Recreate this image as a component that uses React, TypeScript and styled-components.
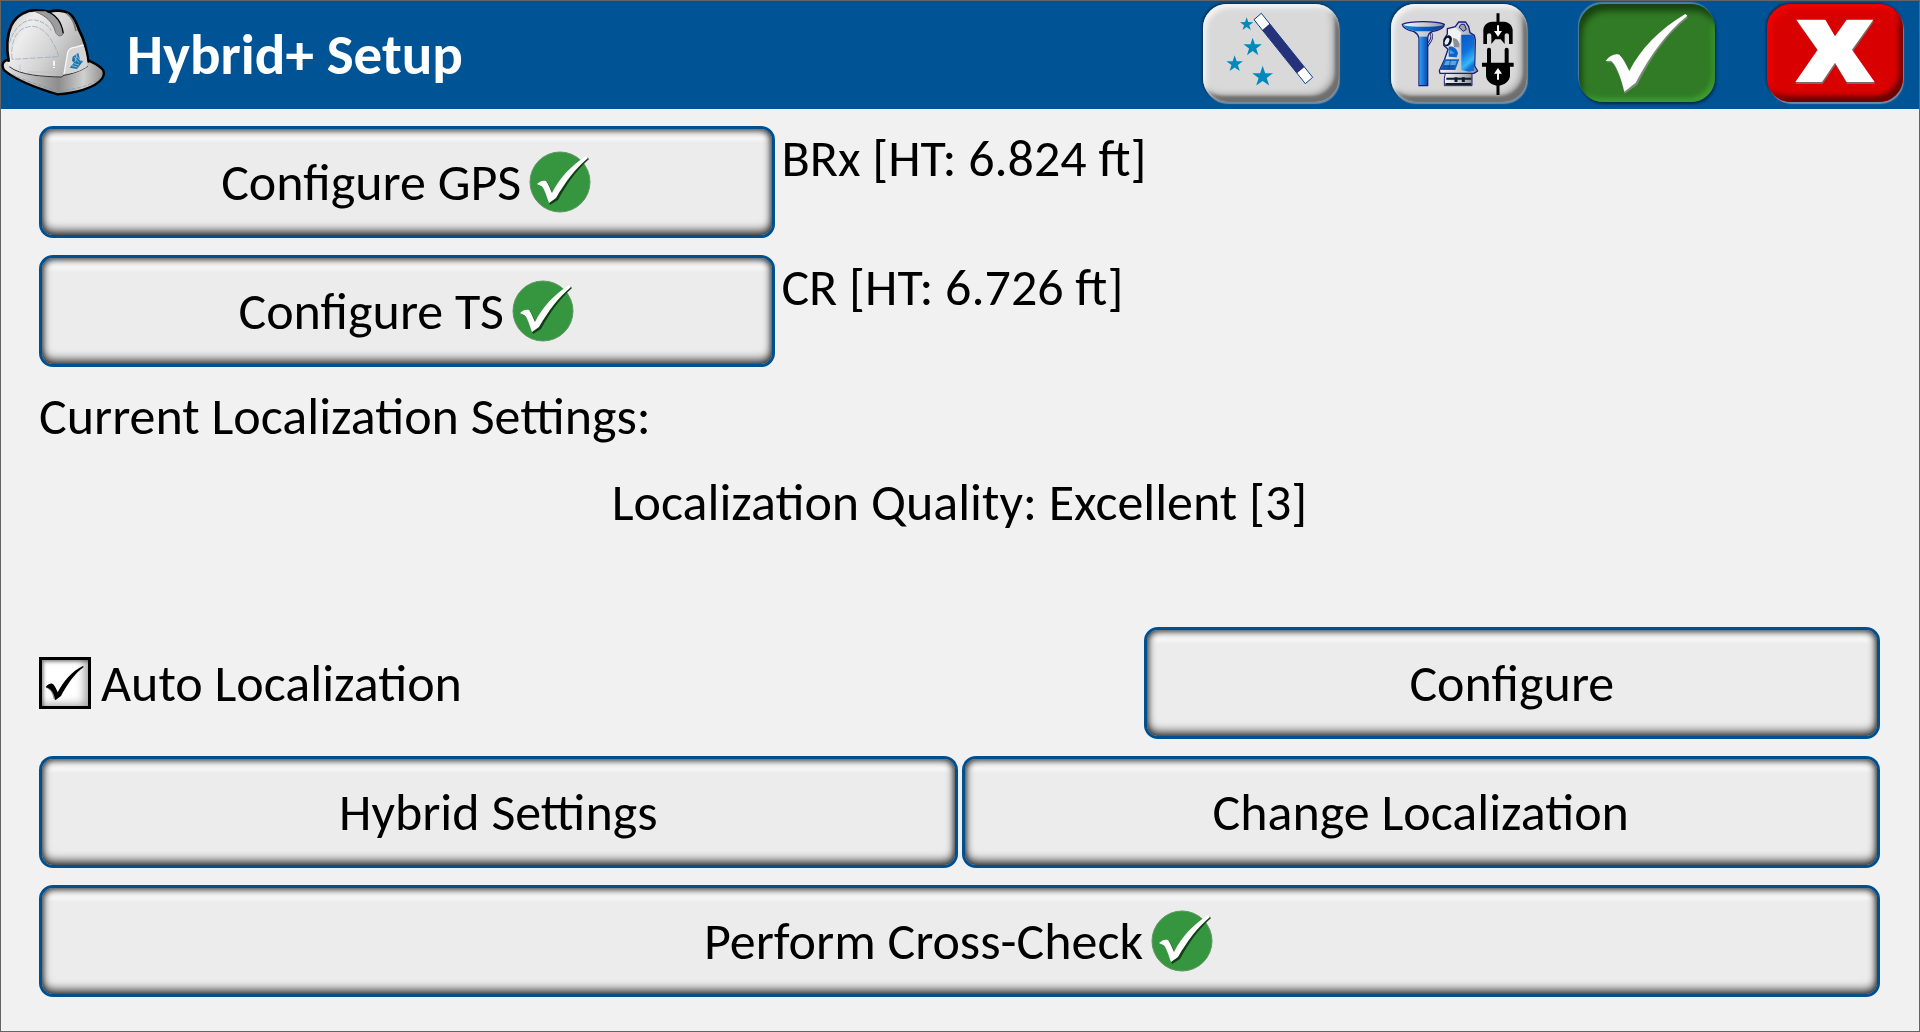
import React, { useState } from "react";
import styled, { createGlobalStyle, css } from "styled-components";

const GlobalStyle = createGlobalStyle`
  * { box-sizing: border-box; }
  body { margin: 0; background: #f1f1f1; }
  button, input { font: inherit; color: inherit; margin: 0; }
`;

const Window = styled.div`
  min-height: 100vh;
  border: 1px solid #646464;
  background: #f1f1f1;
  color: #000;
  font-family: Calibri, Carlito, Lato, sans-serif;
  font-size: 52px;
  line-height: 64px;
`;

const Header = styled.header`
  display: flex;
  align-items: center;
  height: 108px;
  padding-right: 16px;
  background: #005496;
  color: #fff;
`;

const Title = styled.h1`
  flex: 1;
  margin: 0;
  padding-left: 21px;
  font-size: 57px;
  font-weight: 700;
  line-height: 64px;
`;

const Toolbar = styled.div`
  display: flex;
  align-self: flex-start;
  gap: 52px;
  padding-top: 3px;
`;

type Tone = "silver" | "green" | "red";

const tones = {
  silver: css`
    background: #d9d9d9;
    box-shadow:
      inset 3px 4px 5px #f4f4f4,
      inset -4px -6px 3px #6f6f6f,
      inset -7px -8px 6px #a8a8a8,
      1px 2px 1px #6d8ba6,
      -1px -1px 3px #00294a;
  `,
  green: css`
    background: #317b26;
    box-shadow:
      inset 3px 7px 6px #17430f,
      inset -3px -4px 4px #3d9c2e,
      -1px -2px 1px #4d7ea6,
      1px 2px 3px #00294a;
  `,
  red: css`
    background: #d80000;
    box-shadow:
      inset 3px 4px 6px #f40000,
      inset -4px -6px 4px #6a0000,
      1px 2px 1px #6d8ba6,
      -1px -1px 3px #00294a;
  `,
};

const ToolButton = styled.button<{ $tone: Tone }>`
  display: block;
  width: 136px;
  height: 98px;
  padding: 0;
  border: 0;
  border-radius: 24px;
  cursor: pointer;
  ${(p) => tones[p.$tone]}
  svg { display: block; width: 100%; height: 100%; }
`;

const Content = styled.main`
  display: flex;
  flex-direction: column;
  gap: 17px;
  padding: 17px 39px 34px 38px;
`;

const Row = styled.div`
  display: flex;
  align-items: center;
  justify-content: space-between;
  gap: 4px;
`;

const DeviceRow = styled.div`
  display: flex;
  gap: 6px;
`;

const PushButton = styled.button<{ $size?: "narrow" | "full" }>`
  display: flex;
  align-items: center;
  justify-content: center;
  gap: 8px;
  flex: ${(p) => (p.$size === "narrow" ? "0 0 40%" : "1 1 0")};
  height: 112px;
  padding: 0 12px;
  border: 3px solid #00508f;
  border-radius: 14px;
  background: linear-gradient(#f6f6f6 10px, #ececec 14px);
  box-shadow:
    inset 0 2px 6px rgba(0, 0, 0, 0.65),
    inset 0 -4px 10px rgba(0, 0, 0, 0.75);
  cursor: pointer;
`;

const Settings = styled.section`
  display: flex;
  flex-direction: column;
  gap: 22px;
  min-height: 226px;
`;

const Heading = styled.h2`
  margin: 0;
  font-size: inherit;
  font-weight: 400;
`;

const Quality = styled.p`
  margin: 0;
  text-align: center;
`;

const CheckLabel = styled.label`
  display: flex;
  align-items: center;
  gap: 10px;
  cursor: pointer;
`;

const CheckBox = styled.span`
  display: grid;
  width: 52px;
  height: 52px;
  > * { grid-area: 1 / 1; }
  svg { pointer-events: none; width: 52px; height: 52px; }
`;

const CheckInput = styled.input`
  appearance: none;
  width: 52px;
  height: 52px;
  border: 3px solid #000;
  background: #fff;
  box-shadow:
    inset 2px 2px 3px rgba(0, 0, 0, 0.35),
    inset -4px -2px 8px rgba(0, 0, 0, 0.35);
  cursor: pointer;
`;

const HatArt = styled.svg`
  display: block;
  width: 105px;
  height: 108px;
`;

const BadgeArt = styled.svg`
  flex: none;
  width: 64px;
  height: 62px;
`;

const Hat = () => (
  <HatArt viewBox="3 3 315 324" aria-hidden="true">
    <defs>
      <linearGradient id="shell" x1="0" y1="0" x2="1" y2="0.5">
        <stop offset="0" stopColor="#c4c4c4" />
        <stop offset="0.3" stopColor="#ededed" />
        <stop offset="0.65" stopColor="#d3d3d3" />
        <stop offset="1" stopColor="#aaa" />
      </linearGradient>
      <linearGradient id="brim" x1="0" y1="0" x2="1" y2="0">
        <stop offset="0" stopColor="#e6e6e6" />
        <stop offset="0.55" stopColor="#8d8d8d" />
        <stop offset="0.8" stopColor="#d0d0d0" />
        <stop offset="1" stopColor="#8f8f8f" />
      </linearGradient>
    </defs>
    <path
      d="M24 180C6 182 4 200 14 212C45 238 105 263 172 283C225 280 285 264 306 236C320 214 309 201 266 182Z"
      fill="url(#brim)" stroke="#000" strokeWidth="7" strokeLinejoin="round"
    />
    <path
      d="M26 200C20 160 18 110 34 76C50 44 82 29 112 31C128 31 137 32 147 36C165 29 190 31 207 40C228 56 232 78 238 92C252 118 260 145 266 196C240 214 210 222 186 230C130 234 60 226 26 200Z"
      fill="url(#shell)"
    />
    <path
      d="M26 182C20 150 20 108 34 76C50 44 82 29 112 31C128 31 137 32 147 36C165 29 190 31 207 40C228 56 232 78 238 92C252 118 260 145 265 184"
      fill="none" stroke="#000" strokeWidth="8" strokeLinecap="round"
    />
    <path d="M28 200C60 226 130 230 184 231L192 226C215 222 246 212 264 198" fill="none" stroke="#333" strokeWidth="3" />
    <path d="M36 222C80 244 130 262 174 271C230 270 282 254 303 228" fill="none" stroke="#7f93a8" strokeWidth="2" strokeDasharray="12 5" />
    <path d="M137 34C165 42 182 62 190 101C181 113 170 105 165 90C158 68 138 48 106 34Z" fill="#9c9c9c" />
    <path d="M140 34C166 43 184 62 190 100" fill="none" stroke="#000" strokeWidth="4" />
    <path d="M106 35C140 48 158 68 165 92C168 104 180 115 190 101" fill="none" stroke="#6c6c6c" strokeWidth="3" />
    <path d="M200 40C217 53 223 67 228 93" fill="none" stroke="#777" strokeWidth="5" />
    <path d="M28 128C42 84 72 56 105 60C128 64 145 76 154 92" fill="none" stroke="#7c98b3" strokeWidth="2" strokeDasharray="14 4" />
    <path d="M36 178C30 116 55 80 97 79C136 80 163 128 177 170L36 178Z" fill="none" stroke="#8ba3bb" strokeWidth="2" strokeDasharray="18 4" />
    <path d="M162 182V197M162 201V204" fill="none" stroke="#fff" strokeWidth="5" />
    <path d="M60 194V216M84 216H188" fill="none" stroke="#bcbcbc" strokeWidth="2" />
    <path d="M192 222L203 158C206 147 214 143 224 142L250 135C257 150 262 176 263 198C244 213 215 221 192 222Z" fill="#d5d5d5" />
    <path d="M192 222L203 158C206 147 214 143 224 142L250 135" fill="none" stroke="#f8f8f8" strokeWidth="4" />
    <path d="M218 170L235 158L240 180L249 184L231 207L209 203L222 188L216 182Z" fill="#1c75ae" />
    <path d="M223 171L237 188M228 166L243 184M216 197L232 201M222 191L237 195M231 162L225 186" stroke="#c8d9e4" strokeWidth="2" />
  </HatArt>
);

const Star = ({ x, y, r }: { x: number; y: number; r: number }) => {
  const points = Array.from({ length: 10 }, (_, i) => {
    const a = (i * Math.PI) / 5 - Math.PI / 2;
    const d = i % 2 ? r * 0.39 : r;
    return `${x + d * Math.cos(a)},${y + d * Math.sin(a)}`;
  }).join(" ");
  return <polygon points={points} fill="#0089bd" />;
};

const Wand = () => (
  <svg viewBox="39 12 408 294" aria-hidden="true">
    <Star x={170} y={73} r={21} />
    <Star x={188} y={142} r={29} />
    <Star x={134} y={192} r={26} />
    <Star x={218} y={230} r={33} />
    <path d="M192 59L214 40L368 232L346 251Z" fill="#fff" stroke="#0b3d86" strokeWidth="3" />
    <path d="M217 90L239 71L343 201L321 220Z" fill="#25317a" />
  </svg>
);

const Instruments = () => (
  <svg viewBox="-21 -18 408 294" aria-hidden="true">
    <defs>
      <linearGradient id="pole" x1="0" y1="0" x2="1" y2="0">
        <stop offset="0" stopColor="#2e9bf0" />
        <stop offset="1" stopColor="#084fb4" />
      </linearGradient>
      <linearGradient id="dish" x1="0" y1="0" x2="1" y2="0">
        <stop offset="0" stopColor="#1a8be6" />
        <stop offset="0.5" stopColor="#0a5cc0" />
        <stop offset="1" stopColor="#093f94" />
      </linearGradient>
      <linearGradient id="metal" x1="0" y1="0" x2="1" y2="0">
        <stop offset="0" stopColor="#f4f6f8" />
        <stop offset="0.6" stopColor="#c2c6cc" />
        <stop offset="1" stopColor="#8f949c" />
      </linearGradient>
      <linearGradient id="panel" x1="0" y1="0" x2="0.3" y2="1">
        <stop offset="0" stopColor="#0a55c0" />
        <stop offset="0.5" stopColor="#0d70dd" />
        <stop offset="0.85" stopColor="#35b8f6" />
        <stop offset="1" stopColor="#1371d6" />
      </linearGradient>
    </defs>
    <g strokeLinejoin="round">
      <path d="M96 66C103 72 103 84 97 93L87 108" fill="none" stroke="#1d1d78" strokeWidth="8" />
      <path d="M96 66C103 72 103 84 97 93L87 107" fill="none" stroke="#e4e8f0" strokeWidth="3" />
      <path
        d="M13 43C35 32 117 32 139 43C138 56 118 62 102 65C94 68 90 76 89 84V227H63V84C61 76 57 70 48 65C32 61 15 56 13 43Z"
        fill="url(#metal)" stroke="#1d1d78" strokeWidth="4"
      />
      <path d="M17 46C45 52 107 52 136 46C132 56 116 60 100 64H52C34 60 20 56 17 46Z" fill="url(#dish)" />
      <path d="M65 80H87V225H65Z" fill="url(#pole)" />
      <path d="M142 190H222V227H139V205Z" fill="url(#metal)" stroke="#1d1d78" strokeWidth="3" />
      <path
        d="M124 182L140 148L150 118L137 106L138 88L148 72V56L172 50L182 36H203L212 50L216 68L229 76L232 90L230 168L239 183L228 190H126Z"
        fill="url(#metal)" stroke="#1d1d78" strokeWidth="4"
      />
      <path d="M183 52L189 43H199L205 58L196 64Z" fill="#9ba1ab" stroke="#1d1d78" strokeWidth="3" />
    </g>
    <path d="M190 74H226L229 90V182L213 185L190 180Z" fill="url(#panel)" />
    <path d="M150 60L172 54L190 68L184 100L160 110L150 84Z" fill="#f0f2f4" />
    <path d="M164 84C178 84 186 96 184 112L168 112Z" fill="#8a9099" />
    <path d="M152 110C165 108 176 114 180 130L176 142L152 140Z" fill="#0e63c8" />
    <path d="M154 118L170 130L156 132Z" fill="#48a4ee" />
    <path d="M140 148H184L172 180H127Z" fill="#1464c0" />
    <path d="M144 153H176L172 165H138Z" fill="#55a6e8" />
    <path d="M134 169H170M131 175H168M158 150L151 178" stroke="#0b3c86" strokeWidth="2" />
    <ellipse cx="149" cy="92" rx="12" ry="17" transform="rotate(22 149 92)" fill="#071221" />
    <ellipse cx="147" cy="94" rx="6" ry="11" transform="rotate(22 147 94)" fill="#dff0fb" />
    <path d="M145 206H220M142 222H220" stroke="#111a30" strokeWidth="6" />
    <path d="M174 202V216M196 202V216" stroke="#111a30" strokeWidth="9" />
    <path d="M300 10V40M300 220V255" stroke="#000" strokeWidth="9" />
    <path
      d="M256 102V60C257 45 268 36 282 35H318C332 36 343 45 344 60V102H333V76C333 68 320 68 320 76V102L308 88H292L280 102V76C280 68 267 68 267 76V102Z"
      fill="#000"
    />
    <path d="M273 119V165M326 119V165" stroke="#000" strokeWidth="12" strokeLinecap="round" />
    <path d="M252 158H347V170H336V197C335 214 318 226 300 227C282 226 265 214 264 197V170H252Z" fill="#000" />
    <path d="M300 46V70M300 209V185" stroke="#fff" strokeWidth="6" />
    <path d="M288 63H312L300 80ZM288 191H312L300 174Z" fill="#fff" />
  </svg>
);

const Accept = () => (
  <svg viewBox="57 12 408 294" aria-hidden="true">
    <path d="M139 187C151 170 166 162 180 168C194 181 201 200 208 218C244 151 300 92 378 46L384 53C318 106 279 164 232 254L194 281C184 240 169 200 155 187Z" fill="#7a8a79" />
    <path d="M137 183C149 166 164 160 178 164C192 178 200 197 208 213C242 147 298 88 376 42L382 47C316 101 274 161 227 248L193 275C184 234 169 194 153 182Z" fill="#fff" />
  </svg>
);

const Cancel = () => (
  <svg viewBox="621 12 408 294" aria-hidden="true">
    <path d="M711 64H797L827 113L861 64H942L878 155L946 252H862L827 194L788 252H706L775 155Z" fill="#7d6868" />
    <path d="M709 59H796L825 109L860 59H940L876 149L944 246H860L825 188L786 246H706L773 149Z" fill="#fff" />
  </svg>
);

const Badge = () => (
  <BadgeArt viewBox="0 0 64 62" role="img" aria-label="Complete">
    <circle cx="31" cy="31" r="30" fill="#36963f" stroke="#5f9766" />
    <path d="M10 34C13 31 15 30 18 31C21 35 22 39 24 43C32 27 43 16 58 6L60 8C47 20 39 31 29 49L21 54C18 45 16 38 13 36Z" fill="#123d16" />
    <path d="M8 33C11 30 14 29 17 30C20 34 21 38 23 42C31 26 42 15 57 5L59 7C46 18 37 30 27 47L20 52C17 44 15 36 12 35Z" fill="#fff" />
  </BadgeArt>
);

export default function App() {
  const [auto, setAuto] = useState(true);
  return (
    <Window>
      <GlobalStyle />
      <Header>
        <Hat />
        <Title>Hybrid+ Setup</Title>
        <Toolbar>
          <ToolButton $tone="silver" aria-label="Wizard"><Wand /></ToolButton>
          <ToolButton $tone="silver" aria-label="Switch instrument"><Instruments /></ToolButton>
          <ToolButton $tone="green" aria-label="Accept"><Accept /></ToolButton>
          <ToolButton $tone="red" aria-label="Cancel"><Cancel /></ToolButton>
        </Toolbar>
      </Header>
      <Content>
        <DeviceRow>
          <PushButton $size="narrow">Configure GPS<Badge /></PushButton>
          <span>BRx [HT: 6.824 ft]</span>
        </DeviceRow>
        <DeviceRow>
          <PushButton $size="narrow">Configure TS<Badge /></PushButton>
          <span>CR [HT: 6.726 ft]</span>
        </DeviceRow>
        <Settings>
          <Heading>Current Localization Settings:</Heading>
          <Quality>Localization Quality: Excellent [3]</Quality>
        </Settings>
        <Row>
          <CheckLabel>
            <CheckBox>
              <CheckInput type="checkbox" checked={auto} onChange={(e) => setAuto(e.target.checked)} />
              {auto && (
                <svg viewBox="0 0 156 156" aria-hidden="true">
                  <path d="M20 92C28 83 36 82 42 89L52 130L44 126C40 106 34 96 20 92Z" fill="#8a8a8a" />
                  <path d="M20 90C30 79 38 78 43 82C49 90 53 98 56 106C74 72 98 43 132 27L134 30C106 50 84 84 66 117L49 130C46 112 40 96 20 90Z" fill="#000" />
                </svg>
              )}
            </CheckBox>
            Auto Localization
          </CheckLabel>
          <PushButton $size="narrow">Configure</PushButton>
        </Row>
        <Row>
          <PushButton>Hybrid Settings</PushButton>
          <PushButton>Change Localization</PushButton>
        </Row>
        <Row>
          <PushButton>Perform Cross-Check<Badge /></PushButton>
        </Row>
      </Content>
    </Window>
  );
}
